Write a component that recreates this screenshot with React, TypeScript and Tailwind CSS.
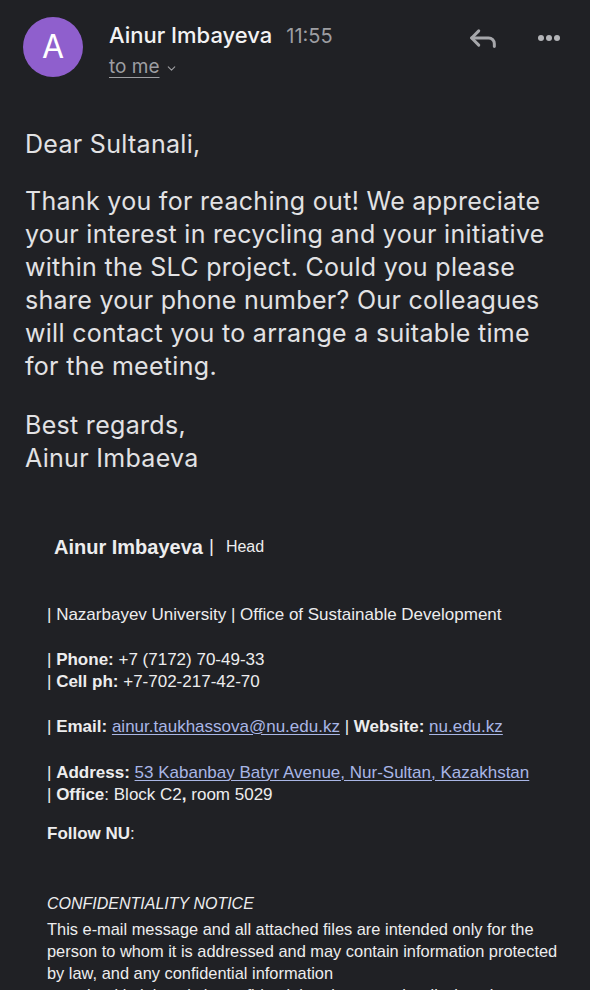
import React from 'react';
import { Reply, ChevronDown } from 'lucide-react';

const sig = { fontFamily: '"Liberation Sans", Arial, sans-serif' };
const ui = { fontFamily: 'Inter, "Noto Sans", sans-serif' };

const Line: React.FC<{ children: React.ReactNode; className?: string }> = ({ children, className = '' }) => (
  <div className={`h-[22px] leading-[22px] whitespace-nowrap ${className}`}>{children}</div>
);

const Link: React.FC<{ children: React.ReactNode }> = ({ children }) => (
  <span className="text-[#a9b6e6] underline underline-offset-2 decoration-1">{children}</span>
);

export default function App() {
  return (
    <div className="h-[990px] w-full overflow-hidden bg-[#202125] text-[#e4e4e6]">
      {/* header */}
      <div className="flex items-start pl-[23px] pr-[30px] pt-[17px]" style={ui}>
        <div className="flex h-[60px] w-[60px] shrink-0 items-center justify-center rounded-full bg-[#8f5fcd] text-[32px] text-white">
          A
        </div>
        <div className="ml-[26px] flex-1 pt-[2px]">
          <div className="flex items-baseline">
            <span className="text-[22px] font-medium text-[#f2f2f3]">Ainur Imbayeva</span>
            <span className="ml-[14px] text-[20px] text-[#9d9ea2]">11:55</span>
          </div>
          <div className="mt-[1px] flex items-center text-[19px] text-[#9d9ea2]">
            <span className="underline underline-offset-4 decoration-1">to me</span>
            <ChevronDown size={13} strokeWidth={2} className="ml-[5px] mt-[2px]" />
          </div>
        </div>
        <div className="flex items-center pt-[4px]">
          <Reply size={34} strokeWidth={2.1} className="text-[#a6a7ab]" />
          <div className="ml-[38px] flex gap-[2px]">
            <span className="h-[6px] w-[6px] rounded-full bg-[#b3b4b8]" />
            <span className="h-[6px] w-[6px] rounded-full bg-[#b3b4b8]" />
            <span className="h-[6px] w-[6px] rounded-full bg-[#b3b4b8]" />
          </div>
        </div>
      </div>

      {/* message body */}
      <div className="mt-[46px] px-[25px] text-[25px] leading-[33px] tracking-[0.3px] text-[#e2e2e4]" style={ui}>
        <p>Dear Sultanali,</p>
        <p className="mt-[24px]">
          Thank you for reaching out! We appreciate
          <br />
          your interest in recycling and your initiative
          <br />
          within the SLC project. Could you please
          <br />
          share your phone number? Our colleagues
          <br />
          will contact you to arrange a suitable time
          <br />
          for the meeting.
        </p>
        <p className="mt-[26px]">
          Best regards,
          <br />
          Ainur Imbaeva
        </p>
      </div>

      {/* signature */}
      <div className="px-[47px] text-[17px] text-[#ededee]" style={sig}>
        <div className="mt-[60px] flex h-[24px] items-center pl-[7px] whitespace-nowrap">
          <span className="text-[20px] font-bold">Ainur Imbayeva</span>
          <span className="ml-[6px] text-[19px]">|</span>
          <span className="ml-[12px] text-[16px]">Head</span>
        </div>

        <Line className="mt-[45px]">| Nazarbayev University | Office of Sustainable Development</Line>

        <Line className="mt-[23px]">
          | <b>Phone:</b> +7 (7172) 70-49-33
        </Line>
        <Line>
          | <b>Cell ph:</b> +7-702-217-42-70
        </Line>

        <Line className="mt-[23px]">
          | <b>Email:</b> <Link>ainur.taukhassova@nu.edu.kz</Link> | <b>Website:</b> <Link>nu.edu.kz</Link>
        </Line>

        <Line className="mt-[24px]">
          | <b>Address:</b> <Link>53 Kabanbay Batyr Avenue, Nur-Sultan, Kazakhstan</Link>
        </Line>
        <Line>
          | <b>Office</b>: Block C2<b>,</b> room 5029
        </Line>

        <Line className="mt-[17px]">
          <b>Follow NU</b>:
        </Line>

        <Line className="mt-[48px] text-[16px] italic">CONFIDENTIALITY NOTICE</Line>
        <div className="mt-[3px] text-[16.4px]">
          <Line>This e-mail message and all attached files are intended only for the</Line>
          <Line>person to whom it is addressed and may contain information protected</Line>
          <Line>by law, and any confidential information</Line>
          <Line>contained in it is strictly confidential and may not be disclosed to</Line>
        </div>
      </div>
    </div>
  );
}
